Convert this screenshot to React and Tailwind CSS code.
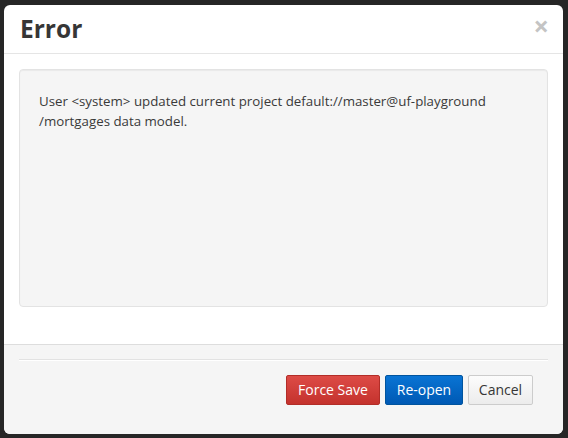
export default function App() {
  return (
    <div className="w-[568px] h-[438px] bg-[#262626] pt-[5px] pl-[4px] overflow-hidden" style={{ fontFamily: '"Open Sans", sans-serif' }}>
      <div className="w-[559px] h-[429px] bg-white rounded-[6px] flex flex-col overflow-hidden">
        <div className="relative border-b border-[#e5e5e5] pt-[11px] pb-[11px] px-[16px]">
          <h1 className="text-[24.5px] leading-[26px] font-bold text-[#363636]">Error</h1>
          <span className="absolute right-[14px] top-[6px] text-[27px] leading-[30px] font-bold text-[#c4c4c4]">×</span>
        </div>
        <div className="px-[15px] pt-[15px] pb-[37px] flex-1">
          <div className="h-full border border-[#e3e3e3] bg-[#f5f5f5] rounded-[4px] shadow-[inset_0_1px_1px_rgba(0,0,0,0.05)] pt-[21px] px-[19px] text-[13.3px] leading-[20px] text-[#3a3a3a]">
            User &lt;system&gt; updated current project default://master@uf-playground
            <br />
            /mortgages data model.
          </div>
        </div>
        <div className="h-[90px] border-t border-[#dddddd] bg-[#f5f5f5] px-[15px] pt-[14px]">
          <div className="border-t border-[#e2e2e2] border-b border-b-white"></div>
          <div className="flex justify-end gap-[5px] pr-[15px] pt-[14px]">
            <button className="h-[30px] w-[94px] rounded-[2px] border border-[#b22d28] bg-gradient-to-b from-[#dd4b46] to-[#c4322d] text-white text-[14px] leading-[26px]">Force Save</button>
            <button className="h-[30px] w-[78px] rounded-[2px] border border-[#00549e] bg-gradient-to-b from-[#0a74d4] to-[#0059b4] text-white text-[14px] leading-[26px]">Re-open</button>
            <button className="h-[30px] w-[65px] rounded-[2px] border border-[#cccccc] bg-gradient-to-b from-[#fcfcfc] to-[#ececec] text-[#363636] text-[14px] leading-[26px]">Cancel</button>
          </div>
        </div>
      </div>
    </div>
  );
}
